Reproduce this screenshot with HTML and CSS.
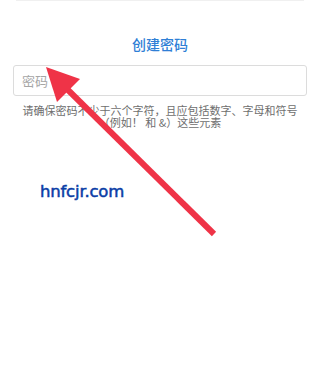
FILE: index.html
```html
<!DOCTYPE html>
<html lang="zh">
<head>
<meta charset="utf-8">
<link rel="stylesheet" href="styles.css">
</head>
<body>
<div class="page">
  <div class="topline"></div>
  <h1 class="title">创建密码</h1>
  <div class="field"><input class="input" type="password" placeholder="密码"></div>
  <p class="hint">请确保密码不少于六个字符，且应包括数字、字母和符号（例如！ 和 &amp;）这些元素</p>
  <div class="mark">hnfcjr.com</div>
  <svg class="arrow" width="320" height="380" viewBox="0 0 320 380">
    <line x1="66" y1="88" x2="214" y2="234" stroke="#ef3347" stroke-width="6" stroke-linecap="butt"/>
    <polygon points="46,67 80,79 57,102" fill="#ef3347"/>
  </svg>
</div>
</body>
</html>
```
FILE: styles.css
```css
html, body {
  margin: 0;
  padding: 0;
  background: #ffffff;
}
.page {
  position: relative;
  width: 320px;
  height: 380px;
  overflow: hidden;
  font-family: "Noto Sans CJK SC", "Noto Sans", sans-serif;
}
.topline {
  height: 1px;
  margin: 0 16px;
  background: #f0f0f0;
}
.title {
  margin: 33px 0 0;
  font-size: 14px;
  line-height: 20px;
  font-weight: 500;
  color: #2f7fd6;
  text-align: center;
}
.field {
  margin: 11px 13px 0;
}
.input {
  box-sizing: border-box;
  display: block;
  width: 100%;
  height: 31px;
  margin: 0;
  padding: 0 8px;
  border: 1px solid #dcdcdc;
  border-radius: 3px;
  font-family: "Noto Sans CJK SC", sans-serif;
  font-size: 13px;
  color: #333;
  background: #fff;
  outline: none;
}
.input::placeholder {
  color: #a6a6a6;
}
.hint {
  margin: 8px 20px 0;
  font-size: 11px;
  line-height: 12px;
  color: #6e6e6e;
  text-align: center;
}
.mark {
  margin: 54px 0 0 40px;
  font-family: "DejaVu Sans", Verdana, sans-serif;
  font-size: 16.5px;
  font-weight: normal;
  line-height: 20px;
  color: #0a3da6;
  -webkit-text-stroke: 0.5px #0a3da6;
  letter-spacing: -0.2px;
}
.arrow {
  position: absolute;
  left: 0;
  top: 0;
}
```
